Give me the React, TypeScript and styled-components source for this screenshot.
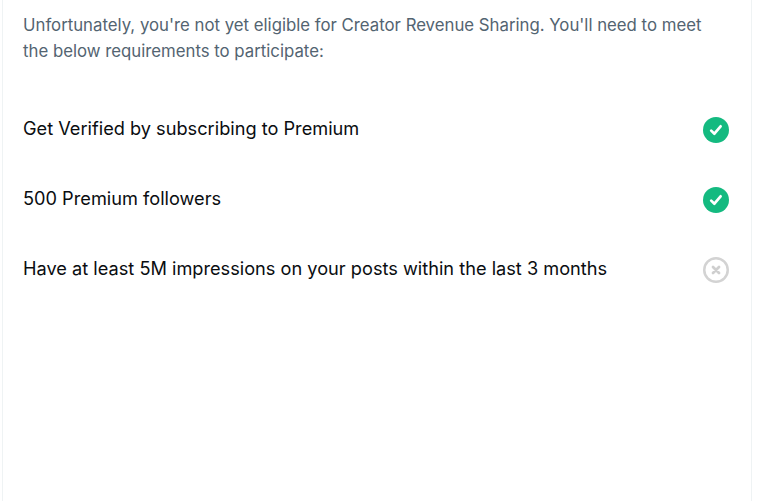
import React from "react";
import styled, { createGlobalStyle } from "styled-components";

const Global = createGlobalStyle`
  html, body { margin: 0; padding: 0; background: #fff; height: 100%; overflow: hidden; }
  #root { height: 100%; }
`;

const Panel = styled.main`
  box-sizing: border-box;
  width: 750px;
  height: 501px;
  margin-left: 2px;
  border-left: 1px solid #eff3f4;
  border-right: 1px solid #eff3f4;
  padding: 12px 22px 0 20px;
  font-family: Inter, "Noto Sans", sans-serif;
`;

const Intro = styled.p`
  margin: 0 0 29px;
  font-size: 16.78px;
  line-height: 26px;
  color: #536471;
`;

const List = styled.ul`
  margin: 0;
  padding: 0;
  list-style: none;
`;

const Row = styled.li`
  display: flex;
  align-items: center;
  justify-content: space-between;
  height: 70px;
  font-size: 18.2px;
  color: #0a0d10;
`;

const Icon = styled.svg`
  width: 26px;
  height: 26px;
  flex: none;
  margin-top: 4px;
`;

const Met = () => (
  <Icon viewBox="0 0 26 26">
    <circle cx="13" cy="13" r="13" fill="#14ba80" />
    <path d="M8.2 13.6l3.2 3.1 6.2-7.4" fill="none" stroke="#fff" strokeWidth="2.7" strokeLinecap="round" strokeLinejoin="round" />
  </Icon>
);

const Unmet = () => (
  <Icon viewBox="0 0 26 26">
    <circle cx="13" cy="13" r="11.75" fill="none" stroke="#d3d3d3" strokeWidth="2.5" />
    <path d="M10 10l6 6M16 10l-6 6" fill="none" stroke="#cfcfcf" strokeWidth="2.8" strokeLinecap="round" />
  </Icon>
);

const items = [
  { text: "Get Verified by subscribing to Premium", met: true },
  { text: "500 Premium followers", met: true },
  { text: "Have at least 5M impressions on your posts within the last 3 months", met: false },
];

export default function App() {
  return (
    <>
      <Global />
      <Panel>
        <Intro>
          Unfortunately, you're not yet eligible for Creator Revenue Sharing. You'll need to meet the below requirements to participate:
        </Intro>
        <List>
          {items.map((item) => (
            <Row key={item.text}>
              <span>{item.text}</span>
              {item.met ? <Met /> : <Unmet />}
            </Row>
          ))}
        </List>
      </Panel>
    </>
  );
}
